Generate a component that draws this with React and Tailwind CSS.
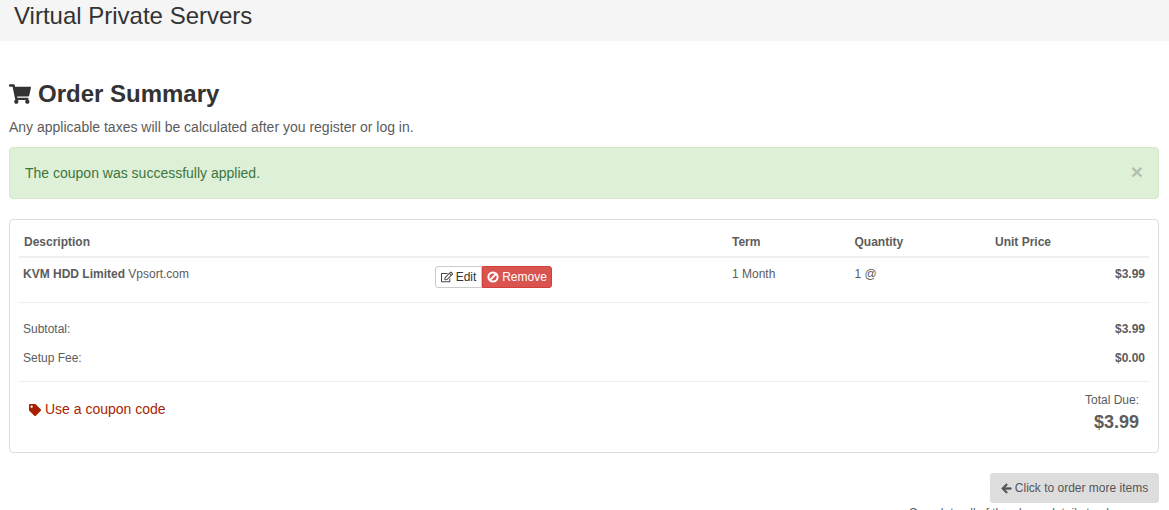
import React from "react";
import { FaShoppingCart, FaRegEdit, FaTag, FaArrowLeft } from "react-icons/fa";

function BanIcon() {
  return (
    <svg viewBox="0 0 12 12" className="h-[12px] w-[12px]" fill="none" stroke="currentColor" strokeWidth="2">
      <circle cx="6" cy="6" r="4.6" />
      <line x1="2.9" y1="9.1" x2="9.1" y2="2.9" />
    </svg>
  );
}

export default function App() {
  return (
    <div className="h-[510px] overflow-hidden bg-white font-['Liberation_Sans',Arial,sans-serif] text-[14px] text-[#5c5c5c]">
      <header className="h-[41px] bg-[#f5f5f5] pl-[14px] pt-[1px]">
        <h1 className="text-[24px] leading-[30px] text-[#333]">Virtual Private Servers</h1>
      </header>

      <main className="pl-[9px] pr-[10px]">
        <h2 className="mt-[36px] flex h-[33px] items-center text-[24px] font-bold text-[#333]">
          <FaShoppingCart className="mr-[7px] h-[22px] w-[22px] text-[#333]" />
          Order Summary
        </h2>
        <p className="mt-[7px] h-[20px] leading-[20px]">Any applicable taxes will be calculated after you register or log in.</p>

        <div className="mt-[10px] flex h-[52px] items-center justify-between rounded-[4px] border border-[#d6e9c6] bg-[#dff0d8] pl-[15px] pr-[15px] text-[#3c763d]">
          <span>The coupon was successfully applied.</span>
          <span className="pb-[3px] text-[21px] font-bold leading-none text-black opacity-20">×</span>
        </div>

        <section className="mt-[20px] h-[234px] rounded-[4px] border border-[#ddd] px-[9px] text-[12px]">
          <div className="flex h-[38px] items-center border-b-2 border-[#eee] pt-[8px] font-bold">
            <div className="w-[713px] pl-[5px]">Description</div>
            <div className="w-[122.5px]">Term</div>
            <div className="w-[140.5px]">Quantity</div>
            <div>Unit Price</div>
          </div>

          <div className="flex h-[45px] items-start border-b border-[#eee]">
            <div className="w-[416px] pl-[4px] pt-[7px]">
              <b>KVM HDD Limited</b> Vpsort.com
            </div>
            <div className="flex w-[297px] pt-[8px]">
              <button className="flex h-[22px] w-[47px] items-center justify-center gap-[3px] rounded-l-[3px] border border-[#ccc] bg-white text-[#333]">
                <FaRegEdit className="h-[12px] w-[12px] text-[#444]" />
                Edit
              </button>
              <button className="flex h-[22px] w-[70px] items-center justify-center gap-[3px] rounded-r-[3px] border border-[#d43f3a] bg-[#d9534f] text-white">
                <BanIcon />
                Remove
              </button>
            </div>
            <div className="w-[122.5px] pt-[7px]">1 Month</div>
            <div className="w-[140.5px] pt-[7px]">1 @</div>
            <div className="flex-1 pr-[4px] pt-[7px] text-right font-bold">$3.99</div>
          </div>

          <div className="flex h-[79px] flex-col border-b border-[#eee] pl-[4px] pt-[11px]">
            <div className="flex h-[29px] items-center justify-between">
              <span>Subtotal:</span>
              <b className="pr-[4px]">$3.99</b>
            </div>
            <div className="flex h-[29px] items-center justify-between">
              <span>Setup Fee:</span>
              <b className="pr-[4px]">$0.00</b>
            </div>
          </div>

          <div className="flex items-start justify-between pl-[10px] pr-[10px] pt-[10px]">
            <a className="mt-[7px] flex items-center gap-[4px] text-[14px] text-[#a91f00]">
              <FaTag className="h-[12px] w-[12px]" />
              Use a coupon code
            </a>
            <div className="text-right">
              <div className="leading-[17px]">Total Due:</div>
              <div className="mt-[1px] text-[18px] font-bold leading-[24px]">$3.99</div>
            </div>
          </div>
        </section>

        <div className="mt-[20px] flex flex-col items-end text-[12px]">
          <button className="flex h-[30px] w-[169px] items-center justify-center gap-[3px] rounded-[3px] bg-[#ddd] text-[#555]">
            <FaArrowLeft className="h-[11px] w-[11px]" stroke="currentColor" strokeWidth={30} />
            Click to order more items
          </button>
          <p className="mt-[3px] w-[280px] pr-[4px] text-right leading-[14px]">Complete all of the above details to place your orders</p>
        </div>
      </main>
    </div>
  );
}
